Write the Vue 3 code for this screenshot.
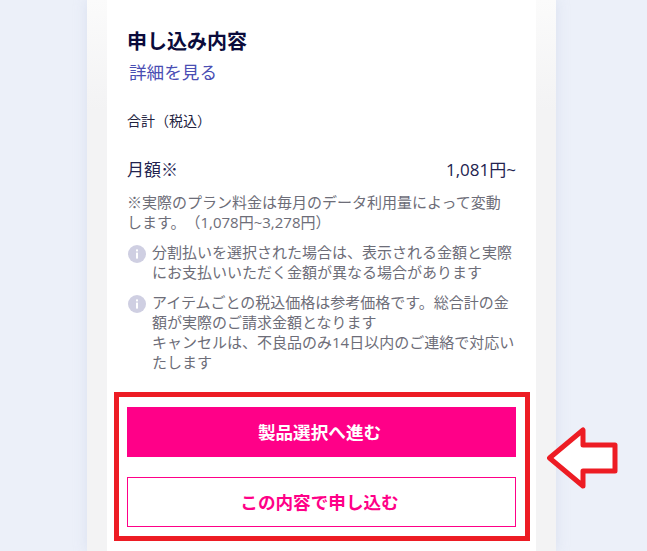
<script setup>
const notes = [
  ['分割払いを選択された場合は、表示される金額と実際にお支払いいただく金額が異なる場合があります'],
  ['アイテムごとの税込価格は参考価格です。総合計の金額が実際のご請求金額となります', 'キャンセルは、不良品のみ14日以内のご連絡で対応いたします']
]
</script>

<template>
  <div class="page">
    <div class="panel">
      <section class="card">
        <h2 class="title">申し込み内容</h2>
        <a class="link">詳細を見る</a>
        <p class="total">合計（税込）</p>
        <div class="row">
          <span>月額※</span>
          <span>1,081円~</span>
        </div>
        <p class="plan">※実際のプラン料金は毎月のデータ利用量によって変動します。（1,078円~3,278円）</p>
        <div v-for="(note, i) in notes" :key="i" class="note">
          <svg class="icon" viewBox="0 0 18 18" aria-hidden="true">
            <circle cx="9" cy="9" r="9" fill="#cfcfe2" />
            <rect x="8" y="7.6" width="2" height="6" fill="#fff" />
            <rect x="8" y="4.4" width="2" height="2" fill="#fff" />
          </svg>
          <div class="note-text">
            <div v-for="(line, j) in note" :key="j">{{ line }}</div>
          </div>
        </div>
        <button class="btn primary">製品選択へ進む</button>
        <button class="btn secondary">この内容で申し込む</button>
      </section>
    </div>
    <div class="highlight"></div>
    <svg class="arrow" viewBox="0 0 72 62" aria-hidden="true">
      <path d="M2.5 31 L36 3 L36 18 L68 18 L68 44 L36 44 L36 59 Z" fill="#fff" stroke="#ed1c24" stroke-width="5" stroke-linejoin="round" />
    </svg>
  </div>
</template>

<style scoped>
.page {
  position: relative;
  width: 647px;
  height: 551px;
  overflow: hidden;
  background: #ecf0f9;
  font-family: "Open Sans", "Noto Sans CJK JP", sans-serif;
  text-spacing-trim: space-all;
}
.panel {
  width: 469px;
  height: 551px;
  margin-left: 87px;
  padding: 0 20px;
  box-sizing: border-box;
  background: linear-gradient(#fbfbfb 0, #f3f3f4 110px);
  box-shadow: 0 0 12px rgba(210, 216, 235, 0.7);
}
.card {
  height: 551px;
  padding: 29px 20px 0;
  box-sizing: border-box;
  background: #fff;
}
.title {
  margin: 0;
  font-size: 20px;
  line-height: 26px;
  font-weight: 700;
  color: #0b0b3b;
}
.link {
  display: block;
  margin: 4px 0 0 2px;
  font-size: 17.6px;
  line-height: 26px;
  color: #4a4eb3;
}
.total {
  margin: 26px 0 0;
  font-size: 14px;
  line-height: 20px;
  color: #23233f;
}
.row {
  display: flex;
  justify-content: space-between;
  margin-top: 27px;
  font-size: 17px;
  line-height: 24px;
  color: #23234f;
}
.plan {
  margin: 10px 0 0;
  padding-right: 6px;
  font-size: 15px;
  line-height: 20px;
  color: #6d6d78;
}
.note {
  display: flex;
  gap: 6px;
  margin-top: 10px;
  font-size: 15px;
  line-height: 20px;
  color: #6d6d78;
}
.icon {
  flex: none;
  width: 18px;
  height: 18px;
  margin: 3px 0 0 1px;
}
.note-text {
  flex: 1;
  min-width: 0;
}
.btn {
  display: block;
  width: 100%;
  height: 50px;
  padding: 0 4px 2px 0;
  border: 1px solid #ff0088;
  font-family: inherit;
  font-size: 17.6px;
  font-weight: 700;
}
.primary {
  margin-top: 35px;
  background: #ff0088;
  color: #fff;
}
.secondary {
  margin-top: 20px;
  background: #fff;
  color: #ff0088;
}
.highlight {
  position: absolute;
  left: 114px;
  top: 392px;
  width: 416px;
  height: 149px;
  box-sizing: border-box;
  border: 5px solid #ed1c24;
}
.arrow {
  position: absolute;
  left: 547px;
  top: 427px;
  width: 72px;
  height: 62px;
}
</style>
